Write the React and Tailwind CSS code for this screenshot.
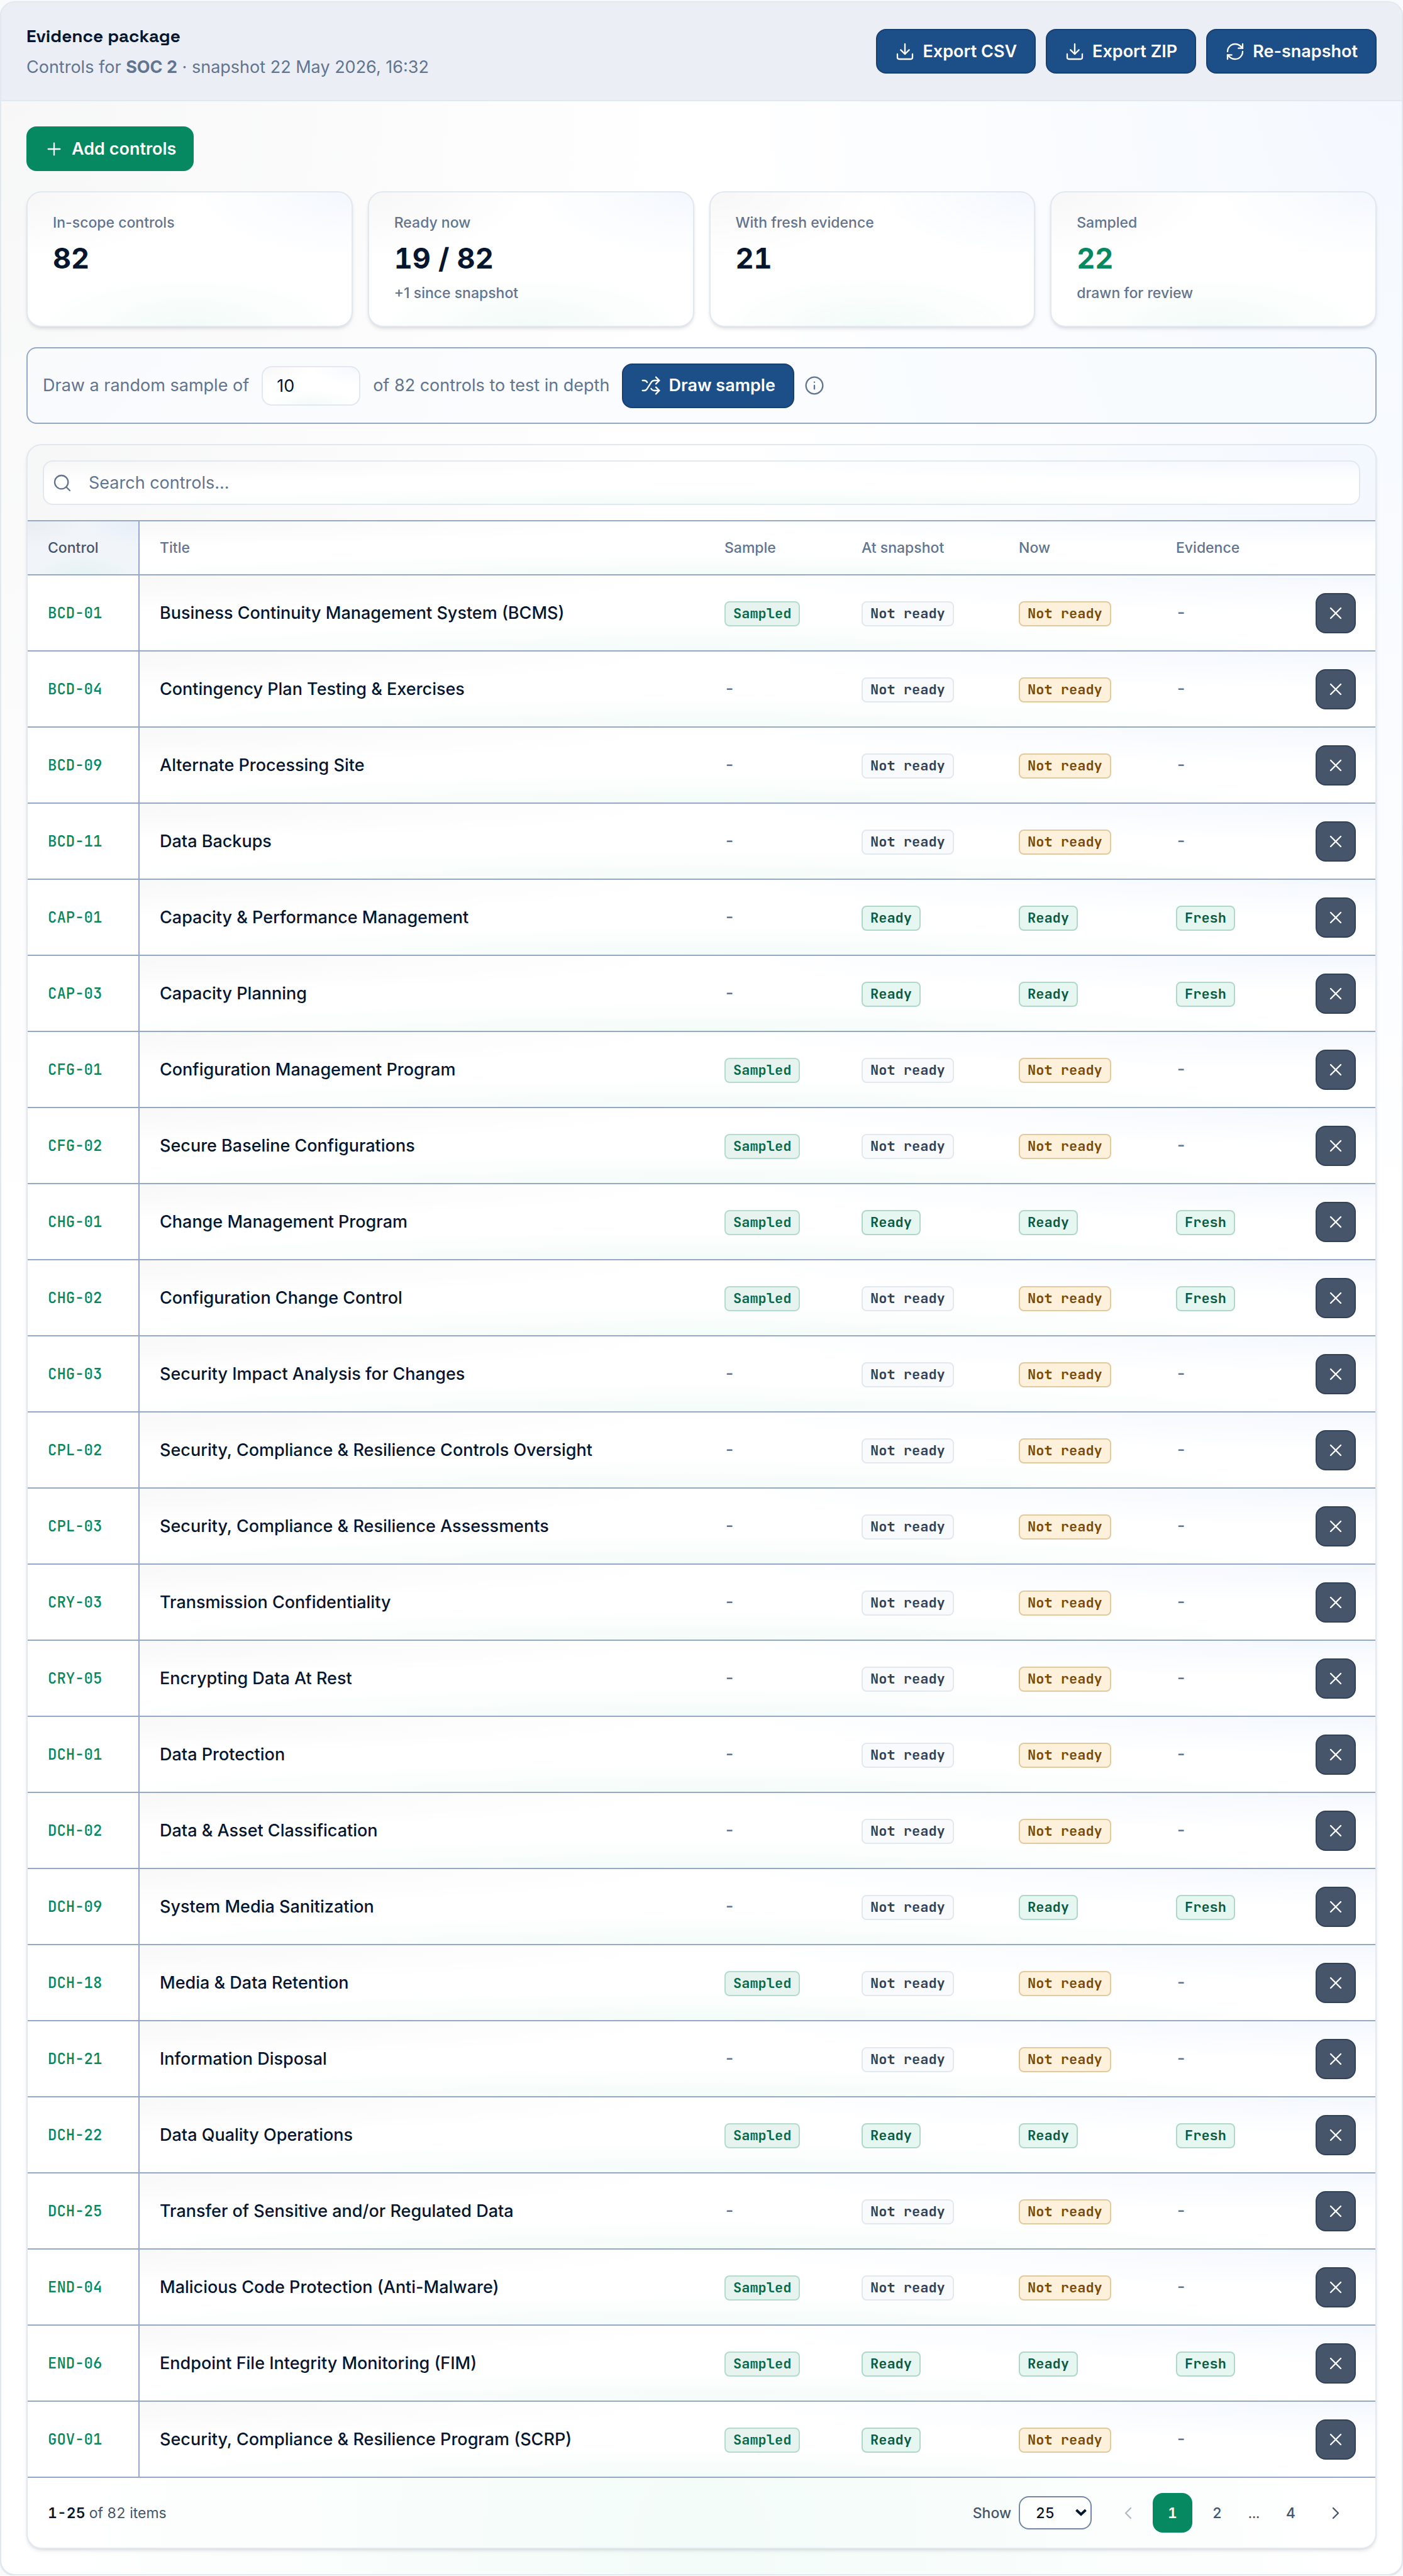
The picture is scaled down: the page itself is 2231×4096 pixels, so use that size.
import { useState } from 'react';
import { ChevronLeft, ChevronRight, Download, Info, Plus, RefreshCw, Search, Shuffle, X } from 'lucide-react';

const MESH = 'bg-[radial-gradient(50%_50%_at_0%_0%,rgba(15,23,42,0.035),transparent),radial-gradient(50%_50%_at_100%_0%,rgba(59,130,246,0.06),transparent),radial-gradient(50%_40%_at_50%_100%,rgba(16,185,129,0.05),transparent)]';

const STATS = [
  { label: 'In-scope controls', value: '82' },
  { label: 'Ready now', value: '19 / 82', note: '+1 since snapshot' },
  { label: 'With fresh evidence', value: '21' },
  { label: 'Sampled', value: '22', note: 'drawn for review', accent: true },
];

const TONES = {
  Sampled: 'bg-[#e6f3ef] border-[#b3dccc] text-[#0a6b4b]',
  Ready: 'bg-[#e6f6f0] border-[#b0d8c8] text-[#0b5c42]',
  Fresh: 'bg-[#e6f6f0] border-[#b0d8c8] text-[#0b5c42]',
  neutral: 'bg-slate-50 border-slate-200 text-slate-700',
  warning: 'bg-[#fef1dc] border-[#e2c99e] text-[#7a4a08]',
};

// id, title, sampled, ready at snapshot, ready now, fresh evidence
const CONTROLS = [
  ['BCD-01', 'Business Continuity Management System (BCMS)', 1, 0, 0, 0],
  ['BCD-04', 'Contingency Plan Testing & Exercises', 0, 0, 0, 0],
  ['BCD-09', 'Alternate Processing Site', 0, 0, 0, 0],
  ['BCD-11', 'Data Backups', 0, 0, 0, 0],
  ['CAP-01', 'Capacity & Performance Management', 0, 1, 1, 1],
  ['CAP-03', 'Capacity Planning', 0, 1, 1, 1],
  ['CFG-01', 'Configuration Management Program', 1, 0, 0, 0],
  ['CFG-02', 'Secure Baseline Configurations', 1, 0, 0, 0],
  ['CHG-01', 'Change Management Program', 1, 1, 1, 1],
  ['CHG-02', 'Configuration Change Control', 1, 0, 0, 1],
  ['CHG-03', 'Security Impact Analysis for Changes', 0, 0, 0, 0],
  ['CPL-02', 'Security, Compliance & Resilience Controls Oversight', 0, 0, 0, 0],
  ['CPL-03', 'Security, Compliance & Resilience Assessments', 0, 0, 0, 0],
  ['CRY-03', 'Transmission Confidentiality', 0, 0, 0, 0],
  ['CRY-05', 'Encrypting Data At Rest', 0, 0, 0, 0],
  ['DCH-01', 'Data Protection', 0, 0, 0, 0],
  ['DCH-02', 'Data & Asset Classification', 0, 0, 0, 0],
  ['DCH-09', 'System Media Sanitization', 0, 0, 1, 1],
  ['DCH-18', 'Media & Data Retention', 1, 0, 0, 0],
  ['DCH-21', 'Information Disposal', 0, 0, 0, 0],
  ['DCH-22', 'Data Quality Operations', 1, 1, 1, 1],
  ['DCH-25', 'Transfer of Sensitive and/or Regulated Data', 0, 0, 0, 0],
  ['END-04', 'Malicious Code Protection (Anti-Malware)', 1, 0, 0, 0],
  ['END-06', 'Endpoint File Integrity Monitoring (FIM)', 1, 1, 1, 1],
  ['GOV-01', 'Security, Compliance & Resilience Program (SCRP)', 1, 1, 0, 0],
];

const Badge = ({ tone, children }) => (
  <span className={`inline-flex items-center h-10 px-3 rounded-lg border-2 font-['JetBrains_Mono','DejaVu_Sans_Mono',monospace] text-[22px] font-semibold whitespace-nowrap ${TONES[tone || children]}`}>
    {children}
  </span>
);

const Dash = () => (
  <span className="font-['JetBrains_Mono','DejaVu_Sans_Mono',monospace] text-[27px] font-medium text-slate-500">-</span>
);

const NavyButton = ({ icon: Icon, children }) => (
  <button type="button" className="flex items-center gap-3 h-[71px] px-7 rounded-2xl border-2 border-[#183f70] bg-[#1c4e87] text-white font-semibold whitespace-nowrap">
    <Icon size={32} strokeWidth={1.75} />
    {children}
  </button>
);

const PageButton = ({ active, disabled, label, children }) => (
  <button
    type="button"
    aria-label={label}
    aria-current={active ? 'page' : undefined}
    disabled={disabled}
    className={`flex items-center justify-center size-[63px] rounded-2xl ${active ? 'bg-[#068860] text-white font-semibold' : 'text-slate-600 font-medium'} ${disabled ? 'opacity-40' : ''}`}
  >
    {children}
  </button>
);

export default function App() {
  const [search, setSearch] = useState('');
  const [sampleSize, setSampleSize] = useState('10');
  const [pageSize, setPageSize] = useState('25');

  const rows = CONTROLS.filter(([id, title]) => `${id} ${title}`.toLowerCase().includes(search.toLowerCase()));

  return (
    <div className="pt-0.5 bg-slate-50 font-['Inter','Liberation_Sans',sans-serif] text-[27px] leading-10 text-[#06162e]">
      <section className={`rounded-3xl border-2 border-slate-200 overflow-hidden bg-white shadow-sm ${MESH}`}>
        {/* Header */}
        <header className="flex items-center justify-between px-10 py-8 border-b-2 border-slate-200 bg-[#ebeff5]">
          <div>
            <h1 className="font-['Space_Grotesk','Inter',sans-serif] text-[28px] leading-[42px] font-semibold">Evidence package</h1>
            <p className="mt-2 leading-[41px] text-slate-500">
              Controls for <strong className="font-bold">SOC 2</strong> · snapshot 22 May 2026, 16:32
            </p>
          </div>
          <div className="flex gap-4">
            <NavyButton icon={Download}>Export CSV</NavyButton>
            <NavyButton icon={Download}>Export ZIP</NavyButton>
            <NavyButton icon={RefreshCw}>Re-snapshot</NavyButton>
          </div>
        </header>

        <div className="flex flex-col gap-8 p-10">
          <button type="button" className="flex items-center gap-3 self-start h-[71px] px-7 rounded-2xl bg-[#068860] text-white font-semibold">
            <Plus size={32} strokeWidth={1.75} />
            Add controls
          </button>

          {/* Stats */}
          <div className="grid grid-cols-4 gap-6">
            {STATS.map(s => (
              <div key={s.label} className={`h-54 px-10 pt-[30px] rounded-3xl border-2 border-slate-200 bg-white shadow-md shadow-slate-900/10 ${MESH}`}>
                <p className="text-[23px] leading-9 font-medium text-slate-500">{s.label}</p>
                <p className={`mt-3 text-[45px] leading-[54px] font-bold tabular-nums ${s.accent ? 'text-[#068860]' : ''}`}>{s.value}</p>
                {s.note && <p className="mt-3 text-[23px] leading-8 font-medium text-slate-500">{s.note}</p>}
              </div>
            ))}
          </div>

          {/* Random sample */}
          <div className="flex items-center gap-5 h-[122px] px-6 rounded-2xl border-2 border-[#94a9c6] bg-[#f8fbfe]/70 text-slate-500">
            <label htmlFor="sample-size">Draw a random sample of</label>
            <input
              id="sample-size"
              type="number"
              value={sampleSize}
              onChange={e => setSampleSize(e.target.value)}
              className={`w-[157px] h-[63px] px-[22px] rounded-2xl border-2 border-slate-200 bg-white text-[#06162e] outline-none ${MESH}`}
            />
            <span>of 82 controls to test in depth</span>
            <div className="flex items-center gap-4">
              <NavyButton icon={Shuffle}>Draw sample</NavyButton>
              <Info size={32} strokeWidth={1.75} />
            </div>
          </div>

          {/* Controls table */}
          <div className={`rounded-3xl border-2 border-slate-200 overflow-hidden bg-white shadow-md shadow-slate-900/10 ${MESH}`}>
            <div className="p-6">
              <div className={`flex items-center gap-[26px] h-[71px] px-[13px] rounded-2xl border-2 border-slate-200 bg-white ${MESH}`}>
                <Search size={32} strokeWidth={1.75} className="text-slate-500" />
                <input
                  type="text"
                  aria-label="Search controls"
                  placeholder="Search controls..."
                  value={search}
                  onChange={e => setSearch(e.target.value)}
                  className="flex-1 bg-transparent outline-none placeholder:text-slate-500"
                />
              </div>
            </div>

            <table className="w-full table-fixed border-separate border-spacing-0 text-left">
              <thead className="text-[23px] text-slate-500">
                <tr className={`bg-white [&>th]:h-[88px] [&>th]:px-8 [&>th]:py-0 [&>th]:font-medium [&>th]:border-y-2 [&>th]:border-[#94a9c6] ${MESH}`}>
                  <th className={`w-[178px] border-r-2 bg-slate-100 text-slate-600 ${MESH}`}>Control</th>
                  <th>Title</th>
                  <th className="w-[218px]">Sample</th>
                  <th className="w-[250px]">At snapshot</th>
                  <th className="w-[250px]">Now</th>
                  <th className="w-[222px]">Evidence</th>
                  <th className="w-[127px]" aria-label="Actions" />
                </tr>
              </thead>
              <tbody>
                {rows.map(([id, title, sampled, before, now, fresh]) => (
                  <tr key={id} className={`bg-white [&>td]:h-[121px] [&>td]:px-8 [&>td]:py-0 [&>td]:border-b-2 [&>td]:border-[#94a9c6] ${MESH}`}>
                    <td className="border-r-2 bg-white font-['JetBrains_Mono','DejaVu_Sans_Mono',monospace] text-2xl font-medium text-[#068860] whitespace-nowrap">{id}</td>
                    <td className="font-medium">{title}</td>
                    <td>{sampled ? <Badge>Sampled</Badge> : <Dash />}</td>
                    <td>{before ? <Badge>Ready</Badge> : <Badge tone="neutral">Not ready</Badge>}</td>
                    <td>{now ? <Badge>Ready</Badge> : <Badge tone="warning">Not ready</Badge>}</td>
                    <td>{fresh ? <Badge>Fresh</Badge> : <Dash />}</td>
                    <td>
                      <button type="button" aria-label={`Remove ${id}`} className="flex items-center justify-center size-16 rounded-2xl border-2 border-slate-700 bg-[#47556b] text-white">
                        <X size={32} strokeWidth={1.75} />
                      </button>
                    </td>
                  </tr>
                ))}
              </tbody>
            </table>

            {/* Pagination */}
            <div className="flex items-center justify-between px-8 py-6 text-[23px] text-slate-600 tabular-nums">
              <p><strong className="font-semibold text-[#06162e]">1-25</strong> of 82 items</p>
              <div className="flex items-center gap-[26px]">
                <div className="flex items-center gap-3">
                  <label htmlFor="page-size" className="font-medium">Show</label>
                  <div className="relative">
                    <select
                      id="page-size"
                      value={pageSize}
                      onChange={e => setPageSize(e.target.value)}
                      className="block appearance-none w-[116px] h-[53px] pl-[25px] rounded-2xl border-2 border-[#7486a3] bg-white/60 font-medium text-[#06162e]"
                    >
                      <option>25</option>
                      <option>50</option>
                      <option>100</option>
                    </select>
                    <svg viewBox="0 0 18 12" className="absolute right-2 top-5 w-[18px] h-3 pointer-events-none" fill="none" stroke="#06162e" strokeWidth="4">
                      <path d="M1.5 2l7.5 7 7.5-7" />
                    </svg>
                  </div>
                </div>
                <nav aria-label="Pagination" className="flex items-center gap-2">
                  <PageButton label="Previous page" disabled><ChevronLeft size={32} strokeWidth={1.75} /></PageButton>
                  <PageButton active>1</PageButton>
                  <PageButton>2</PageButton>
                  <span className="w-[38px] text-center">...</span>
                  <PageButton>4</PageButton>
                  <PageButton label="Next page"><ChevronRight size={32} strokeWidth={1.75} /></PageButton>
                </nav>
              </div>
            </div>
          </div>
        </div>
      </section>
    </div>
  );
}
